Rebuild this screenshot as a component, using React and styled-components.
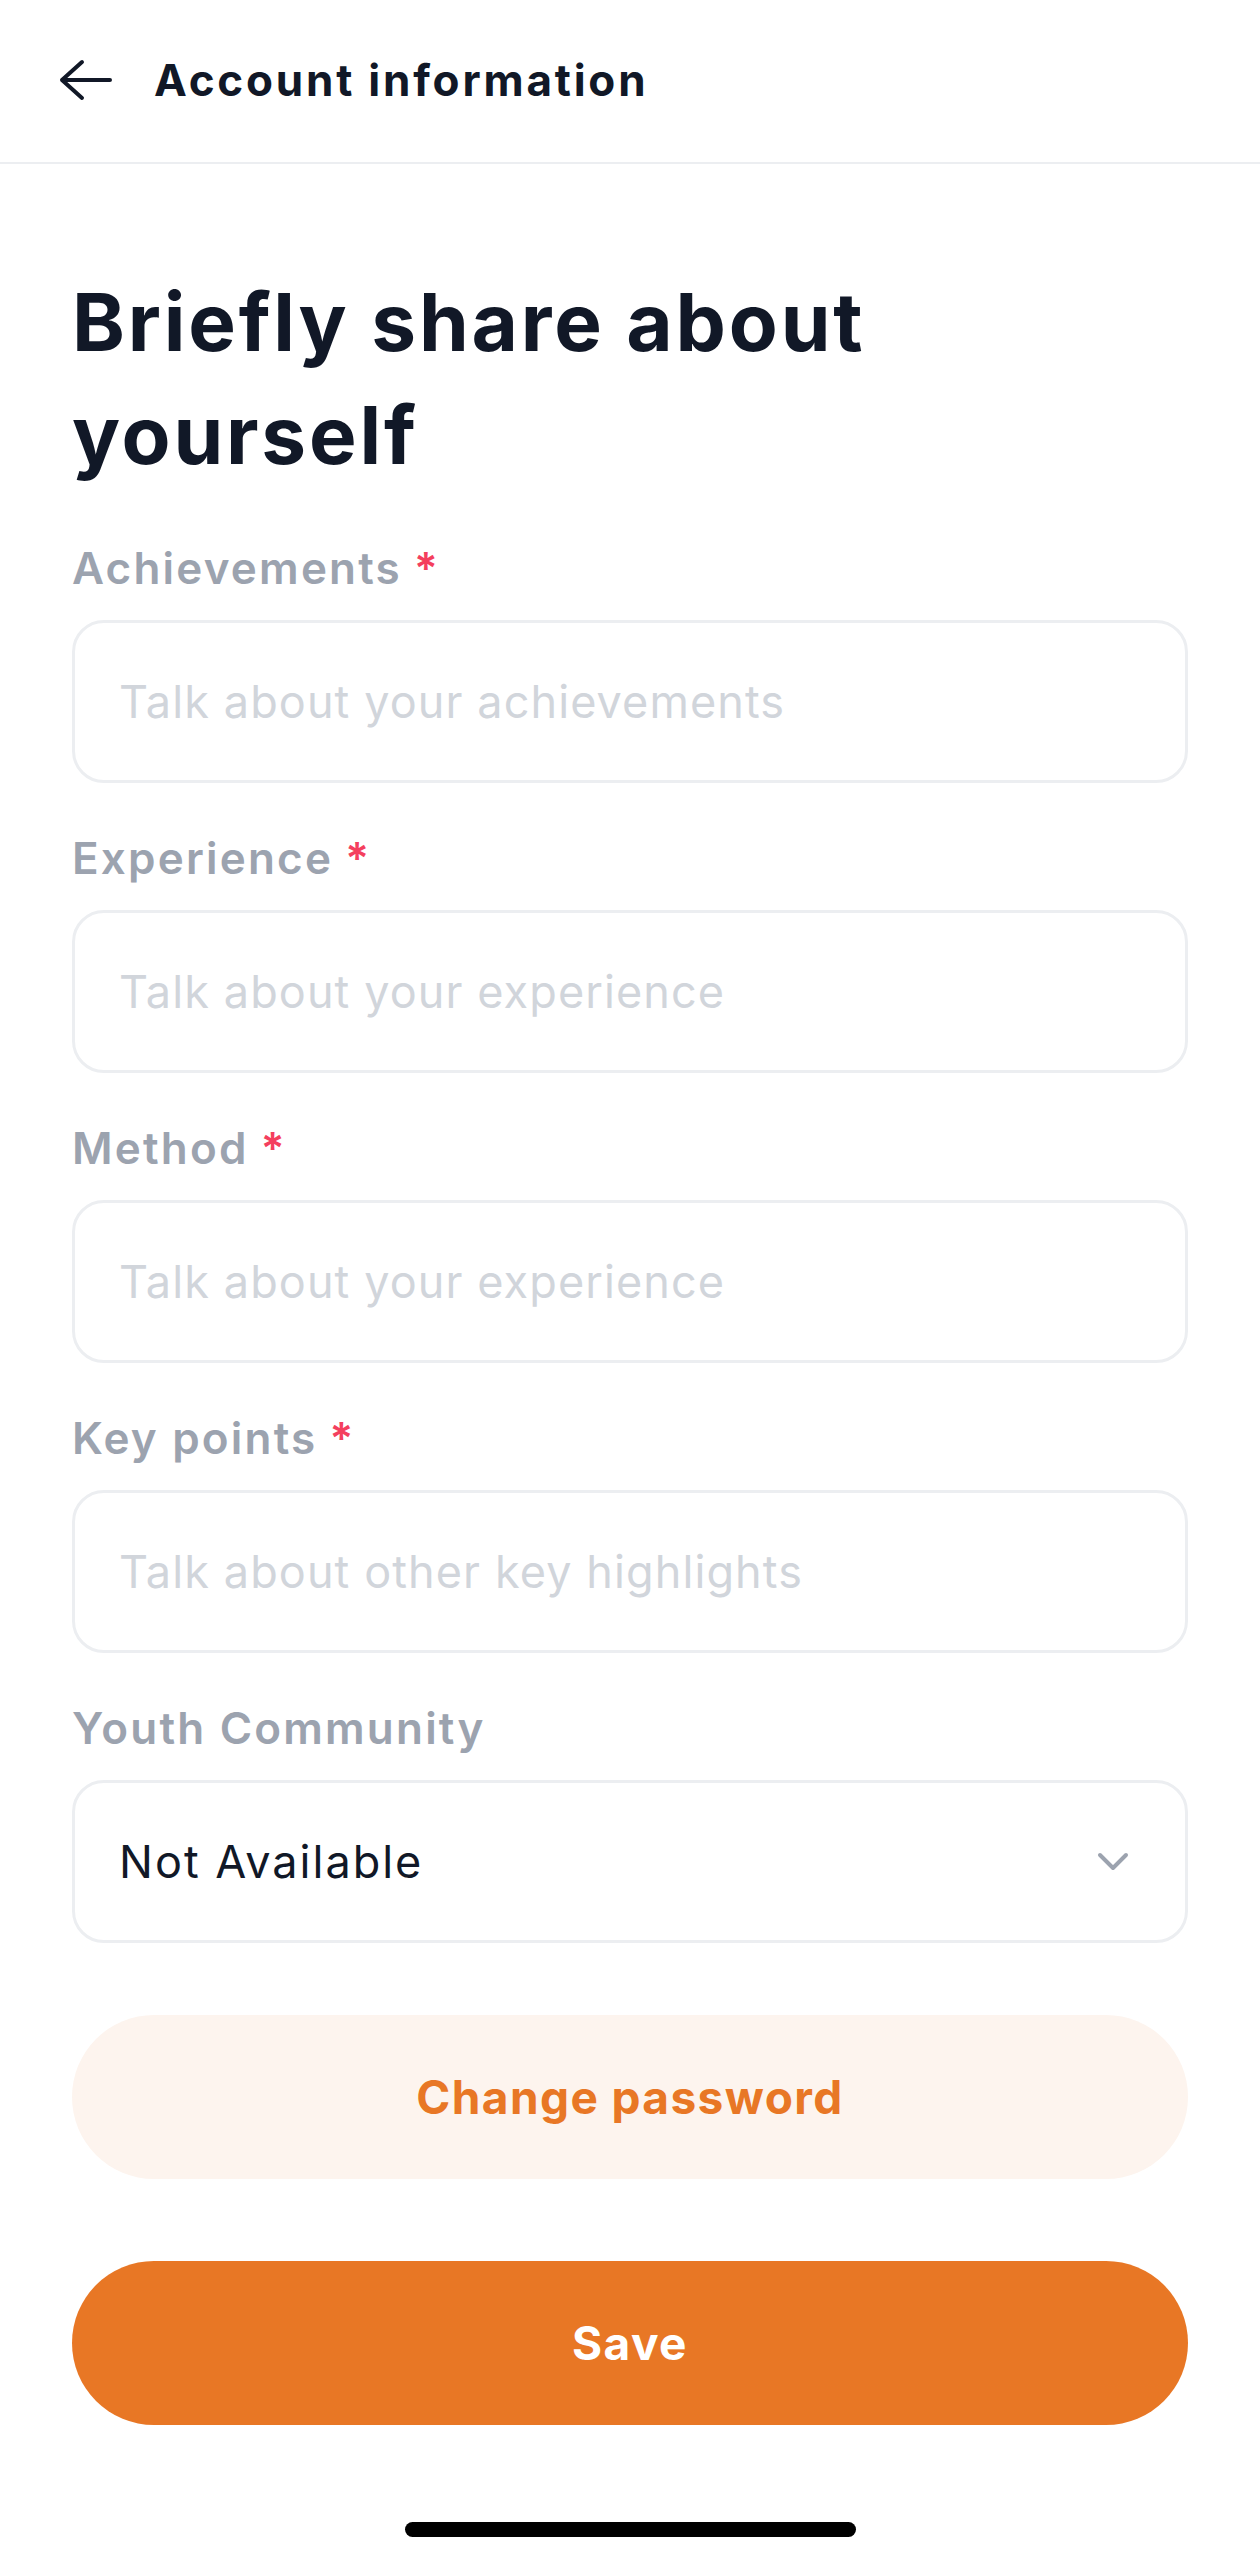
import React from 'react'
import styled, { createGlobalStyle } from 'styled-components'

const GlobalStyle = createGlobalStyle`
    * {
        box-sizing: border-box;
    }
    body {
        margin: 0;
        background: #ffffff;
        font-family: Inter, "Noto Sans", "Liberation Sans", sans-serif;
        -webkit-font-smoothing: antialiased;
    }
`

const Screen = styled.div`
    width: 1260px;
    min-height: 2560px;
    background: #ffffff;
    display: flex;
    flex-direction: column;
`
const Header = styled.header`
    height: 164px;
    display: flex;
    align-items: center;
    gap: 42px;
    padding: 0 0 2px 58px;
    border-bottom: 2px solid #eceef1;
`
const BackButton = styled.button`
    display: flex;
    align-items: center;
    justify-content: center;
    padding: 0;
    border: none;
    background: none;
    cursor: pointer;
    color: #111827;
`
const HeaderTitle = styled.h1`
    margin: 0;
    font-size: 44px;
    font-weight: 700;
    color: #111827;
    letter-spacing: 2.8px;
`
const Content = styled.main`
    padding: 101px 72px 0;
    display: flex;
    flex-direction: column;
`
const Heading = styled.h2`
    margin: 0 0 47px;
    font-size: 80px;
    line-height: 113px;
    font-weight: 700;
    color: #111827;
    letter-spacing: 2.8px;
    max-width: 960px;
`
const Form = styled.form`
    display: flex;
    flex-direction: column;
    gap: 45px;
`
const Field = styled.div`
    display: flex;
    flex-direction: column;
    gap: 22px;
`
const Label = styled.label`
    font-size: 44px;
    line-height: 60px;
    font-weight: 600;
    color: #9ca3af;
    letter-spacing: 2.2px;
`
const Required = styled.span`
    color: #f43f5e;
    margin-left: 12px;
`
const Input = styled.input`
    height: 163px;
    width: 100%;
    border: 3px solid #eceef1;
    border-radius: 32px;
    padding: 0 44px;
    font-family: inherit;
    font-size: 45px;
    letter-spacing: 1.1px;
    color: #111827;
    background: #ffffff;
    outline: none;

    &::placeholder {
        color: #d1d5db;
    }
`
const Select = styled.div`
    height: 163px;
    border: 3px solid #eceef1;
    border-radius: 32px;
    padding: 0 56px 0 44px;
    display: flex;
    align-items: center;
    justify-content: space-between;
    font-size: 45px;
    letter-spacing: 2px;
    color: #111827;
    cursor: pointer;
`
const Actions = styled.div`
    display: flex;
    flex-direction: column;
    gap: 82px;
    margin-top: 72px;
`
const PillButton = styled.button`
    height: 164px;
    width: 100%;
    border: none;
    border-radius: 82px;
    font-family: inherit;
    font-size: 46px;
    font-weight: 700;
    letter-spacing: 1.4px;
    cursor: pointer;
    background: ${p => (p.$primary ? '#e87725' : '#fdf4ee')};
    color: ${p => (p.$primary ? '#ffffff' : '#e87725')};
`
const HomeBar = styled.div`
    width: 451px;
    height: 15px;
    border-radius: 8px;
    background: #000000;
    margin: 97px auto 0;
`

const ArrowLeft = () => (
    <svg width="54" height="44" viewBox="0 0 54 44" fill="none">
        <path d="M52 22H4M24 4L4 22L24 40" stroke="currentColor" strokeWidth="4" strokeLinecap="round" strokeLinejoin="round" />
    </svg>
)

const ChevronDown = () => (
    <svg width="32" height="20" viewBox="0 0 32 20" fill="none">
        <path d="M3 3L16 16L29 3" stroke="#9ca3af" strokeWidth="4" strokeLinecap="round" strokeLinejoin="round" />
    </svg>
)

const fields = [
    { label: 'Achievements', placeholder: 'Talk about your achievements' },
    { label: 'Experience', placeholder: 'Talk about your experience' },
    { label: 'Method', placeholder: 'Talk about your experience' },
    { label: 'Key points', placeholder: 'Talk about other key highlights' },
]

const App = () => {
    return (
        <>
            <GlobalStyle />
            <Screen>
                <Header>
                    <BackButton aria-label="Back"><ArrowLeft /></BackButton>
                    <HeaderTitle>Account information</HeaderTitle>
                </Header>
                <Content>
                    <Heading>Briefly share about yourself</Heading>
                    <Form onSubmit={e => e.preventDefault()}>
                        {fields.map(f => (
                            <Field key={f.label}>
                                <Label>{f.label}<Required>*</Required></Label>
                                <Input placeholder={f.placeholder} />
                            </Field>
                        ))}
                        <Field>
                            <Label>Youth Community</Label>
                            <Select>
                                <span>Not Available</span>
                                <ChevronDown />
                            </Select>
                        </Field>
                    </Form>
                    <Actions>
                        <PillButton type="button">Change password</PillButton>
                        <PillButton type="button" $primary>Save</PillButton>
                    </Actions>
                    <HomeBar />
                </Content>
            </Screen>
        </>
    )
}

export default App
